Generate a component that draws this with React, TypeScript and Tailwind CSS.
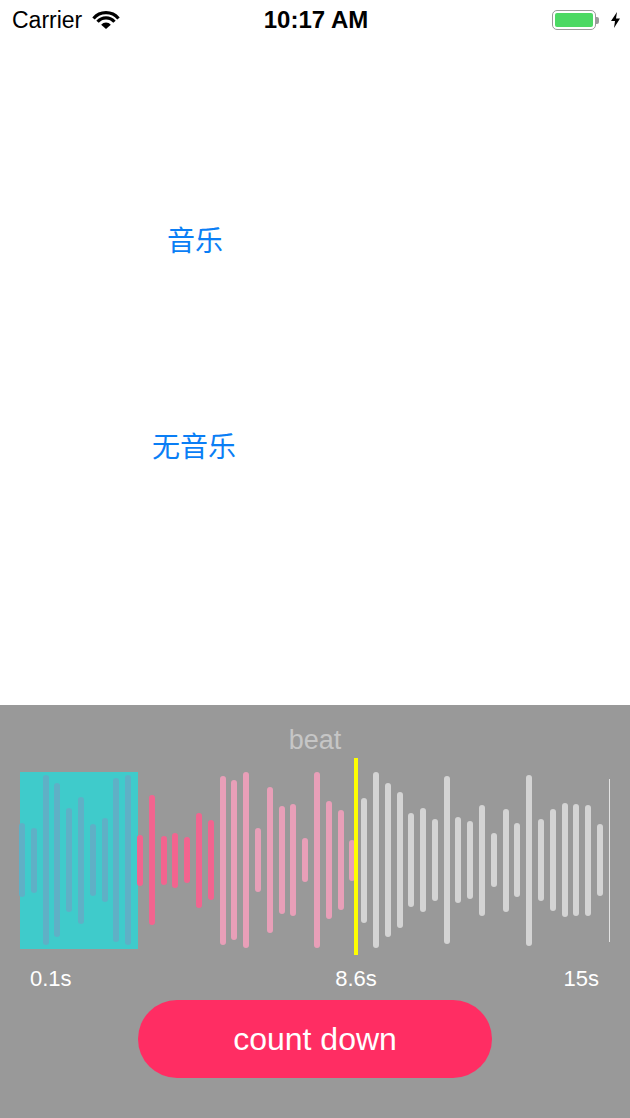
import React from 'react';

const FONT = '"Liberation Sans", "Noto Sans CJK SC", sans-serif';

// heights of the wave bars, left to right
const BARS = [
    74, 65, 170, 154, 104, 127, 72, 84, 164, 170,
    51, 130, 49, 55, 46, 95, 80, 169, 160, 176,
    64, 146, 108, 112, 44, 176, 118, 100, 41, 125,
    176, 154, 136, 94, 104, 82, 168, 86, 78, 111,
    54, 103, 74, 171, 82, 102, 114, 112, 111, 72,
];

const barColor = (i: number) => {
    if (i < 10) return 'bg-[#5fb0c6]';
    if (i < 17) return 'bg-[#f2648f]';
    if (i < 29) return 'bg-[#e89fb8]';
    return 'bg-[#d4d4d4]';
};

function Wifi() {
    return (
        <svg width="28" height="20" viewBox="0 0 26 19">
            <path d="M13 18 L8.4 14.1 A6 6 0 0 1 17.6 14.1 Z" fill="#000" />
            <path d="M4.96 11.25 A10.5 10.5 0 0 1 21.04 11.25" stroke="#000" strokeWidth="3" fill="none" />
            <path d="M1.13 8.04 A15.5 15.5 0 0 1 24.87 8.04" stroke="#000" strokeWidth="3" fill="none" />
        </svg>
    );
}

function StatusBar() {
    return (
        <div className="h-[40px] flex items-center justify-between pl-[12px] pr-[10px] text-black" style={{ fontFamily: FONT }}>
            <div className="flex items-center gap-[10px] w-[200px]">
                <span className="text-[23px] leading-[28px]">Carrier</span>
                <Wifi />
            </div>
            <span className="text-[24px] leading-[28px] font-semibold">10:17 AM</span>
            <div className="flex items-center justify-end gap-[12px] w-[200px]">
                <div className="flex items-center">
                    <div className="w-[44px] h-[20px] rounded-[5px] border-[1.5px] border-[#9a9a9a] p-[2px]">
                        <div className="w-full h-full rounded-[2px] bg-[#4cd964]" />
                    </div>
                    <div className="w-[3px] h-[7px] rounded-r-[2px] bg-[#9a9a9a]" />
                </div>
                <svg width="9" height="16" viewBox="0 0 9 16">
                    <path d="M6 0 L0 9 L4 9 L3 16 L9 6.5 L5 6.5 Z" fill="#000" />
                </svg>
            </div>
        </div>
    );
}

function Waveform() {
    return (
        <div className="relative h-[176px] mt-[17px]">
            {/* selected range */}
            <div className="absolute left-[20px] top-0 w-[118px] h-[177px] bg-[#3fcbcb]" />

            <div className="relative h-full flex items-center gap-[5.8px] pl-[19px]">
                {BARS.map((h, i) => (
                    <div key={i} className={`w-[6px] shrink-0 rounded-full ${barColor(i)}`} style={{ height: h }} />
                ))}
                <div className="w-[1px] h-[163px] shrink-0 bg-[#e2e2e2]" />
            </div>

            {/* playhead */}
            <div className="absolute left-[354px] top-[-14px] w-[4px] h-[197px] bg-[#ffff00]" />
        </div>
    );
}

export default function App() {
    return (
        <div className="w-[630px] h-[1118px] flex flex-col bg-white overflow-hidden" style={{ fontFamily: FONT }}>
            <StatusBar />

            <div className="flex-1 flex flex-col">
                <button className="w-[390px] mt-[185px] text-center text-[28px] leading-[34px] text-[#0a7ef5]">音乐</button>
                <button className="w-[388px] mt-[172px] text-center text-[28px] leading-[34px] text-[#0a7ef5]">无音乐</button>
            </div>

            <div className="h-[413px] bg-[#999999] flex flex-col">
                <div className="mt-[20px] h-[30px] leading-[30px] text-center text-[27px] text-[#c6c6c6]">beat</div>

                <Waveform />

                <div className="relative mt-[19px] h-[24px] flex justify-between pl-[30px] pr-[31px] text-[22px] leading-[24px] text-white">
                    <span>0.1s</span>
                    <span className="absolute left-[356px] -translate-x-1/2">8.6s</span>
                    <span>15s</span>
                </div>

                <button className="mx-auto mt-[9px] w-[354px] h-[78px] rounded-full bg-[#ff2d63] text-white text-[32px]">
                    count down
                </button>
            </div>
        </div>
    );
}
